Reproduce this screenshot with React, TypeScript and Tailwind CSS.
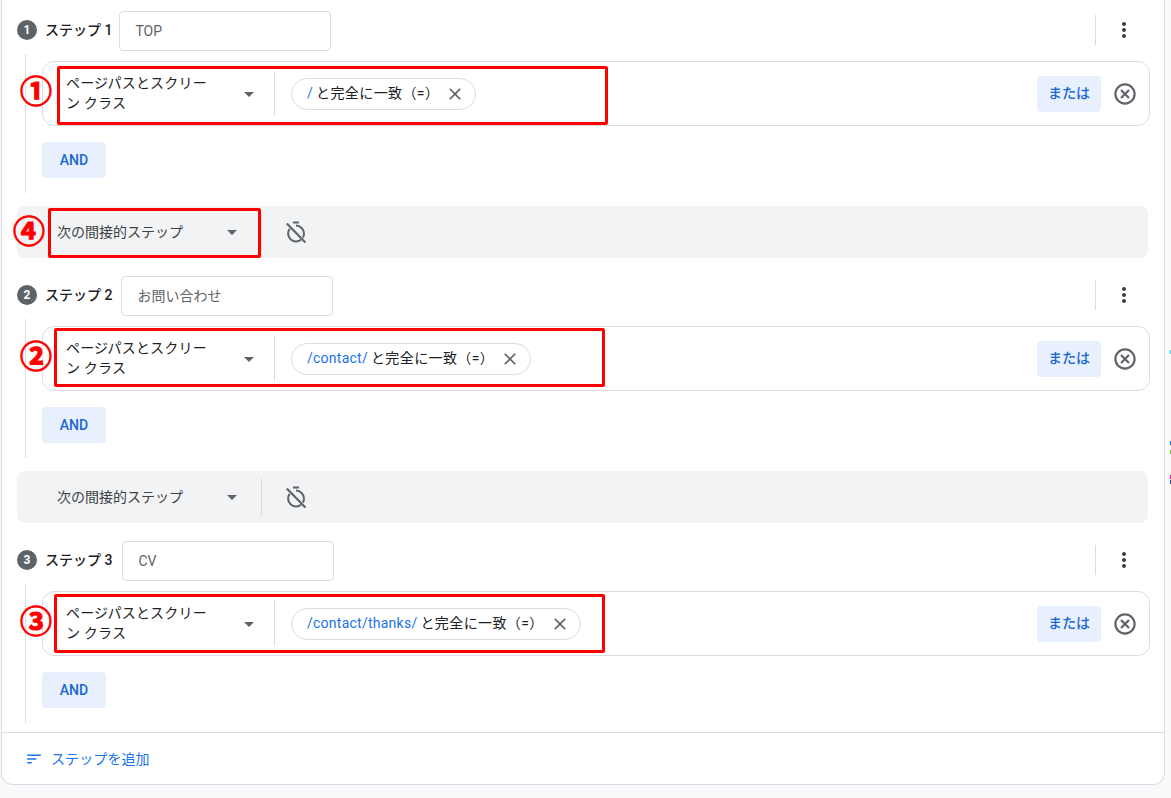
import { MdArrowDropDown, MdClose, MdMoreVert, MdSort } from 'react-icons/md';

const font = { fontFamily: 'Roboto, "Noto Sans CJK JP", sans-serif' };

interface StepProps {
  num: number;
  name: string;
  path: string;
  inputMargin: string;
  chipWidth: string;
  mark: string;
  boxClass: string;
}

const steps: StepProps[] = [
  { num: 1, name: 'TOP', path: '/', inputMargin: 'ml-[7px]', chipWidth: 'w-[185px]', mark: '①', boxClass: 'left-[14px] top-[4px]' },
  { num: 2, name: 'お問い合わせ', path: '/contact/', inputMargin: 'ml-[9px]', chipWidth: 'w-[240px]', mark: '②', boxClass: 'left-[11px] top-[1px]' },
  { num: 3, name: 'CV', path: '/contact/thanks/', inputMargin: 'ml-[10px]', chipWidth: 'w-[290px]', mark: '③', boxClass: 'left-[11px] top-[2px]' },
];

function RemoveIcon() {
  return (
    <svg className="ml-[11px] mr-[11px] text-[#5f6368]" width="26" height="26" viewBox="0 0 26 26" fill="none" stroke="currentColor">
      <circle cx="13" cy="13" r="9.6" strokeWidth="2.2" />
      <path d="M9 9l8 8M17 9l-8 8" strokeWidth="2.2" />
    </svg>
  );
}

function TimerOffIcon() {
  return (
    <svg className="ml-[22px] text-[#5f6368]" width="24" height="24" viewBox="0 0 24 24" fill="none" stroke="currentColor" strokeWidth="2">
      <path d="M9 2.5h6" />
      <path d="M12 5.6a8 8 0 0 1 8 8c0 1.5-.4 2.8-1.1 4M17 19.8A8 8 0 0 1 5.6 8.8" />
      <path d="M2.8 3.4l18.6 19" strokeWidth="2.2" />
    </svg>
  );
}

function Step({ num, name, path, inputMargin, chipWidth, mark, boxClass }: StepProps) {
  return (
    <div>
      <div className="flex h-[40px] items-center pl-[15px]">
        <span className="-mt-[2px] flex h-[20px] w-[20px] items-center justify-center rounded-full bg-[#5f6368] text-[12px] font-bold text-white">{num}</span>
        <span className="-mt-[2px] ml-[8px] whitespace-nowrap text-[14px] font-medium text-[#202124]">ステップ {num}</span>
        <div className={`${inputMargin} flex h-[40px] w-[212px] items-center rounded border border-[#dadce0] bg-white pl-[15px] text-[14px] text-[#5f6368]`}>{name}</div>
        <div className="-mt-[3px] ml-auto flex items-center pr-[28px]">
          <span className="h-[30px] w-px bg-[#dadce0]" />
          <MdMoreVert className="ml-[16px] text-[#3c4043]" size={24} />
        </div>
      </div>
      <div className="ml-[23px] mt-[3px] h-[139px] border-l border-[#dadce0] pl-[16px] pr-[14px] pt-[7px]">
        <div className="relative flex h-[65px] items-center rounded-xl border border-[#dadce0] bg-white">
          <div className="flex h-[45px] w-[232px] items-center border-r border-[#dadce0] pl-[23px] pr-[13px]">
            <span className="-mt-px w-[146px] text-[14px] leading-[20px] tracking-[0.2px] text-[#202124]">ページパスとスクリーン クラス</span>
            <MdArrowDropDown className="ml-auto text-[#5f6368]" size={24} />
          </div>
          <div className={`${chipWidth} ml-[16px] flex h-[32px] items-center rounded-full border border-[#dadce0] pl-[15px] pr-[10px] text-[14px] text-[#202124]`}>
            <span className="tracking-[0.25px] text-[#1a73e8]">{path}</span>
            <span className="ml-[3px] whitespace-nowrap tracking-[0.4px]">と完全に一致（=）</span>
            <MdClose className="ml-auto text-[#5f6368]" size={20} />
          </div>
          <button className="ml-auto flex h-[36px] w-[64px] items-center justify-center rounded bg-[#e8f0fe] text-[14px] font-medium text-[#1967d2]">または</button>
          <RemoveIcon />
          <div className={`absolute ${boxClass} h-[59px] w-[551px] rounded-[2px] border-[3px] border-[#ff0000]`} />
          <span className="absolute -left-[23px] top-[10px] text-[32px] font-bold leading-[40px] text-[#ff0000] [-webkit-text-stroke:1px_#ff0000]">{mark}</span>
        </div>
        <button className="mt-[16px] flex h-[36px] w-[64px] items-center justify-center rounded bg-[#e8f0fe] text-[14px] font-medium text-[#1967d2]">AND</button>
      </div>
    </div>
  );
}

function Connector({ marked }: { marked?: boolean }) {
  return (
    <div className="relative ml-[15px] mr-[16px] mt-[13px] mb-[18px] flex h-[52px] items-center rounded-lg bg-[#f1f3f4]">
      <div className="flex h-[38px] w-[245px] items-center border-r border-[#dadce0] pl-[40px] pr-[17px] text-[14px] text-[#3c4043]">
        <span className="mt-px">次の間接的ステップ</span>
        <MdArrowDropDown className="ml-auto text-[#5f6368]" size={24} />
      </div>
      <TimerOffIcon />
      {marked && (
        <>
          <div className="absolute left-[31px] top-[2px] h-[50px] w-[213px] rounded-[2px] border-[3px] border-[#ff0000]" />
          <span className="absolute -left-[4px] top-[6px] text-[32px] font-bold leading-[40px] text-[#ff0000] [-webkit-text-stroke:1px_#ff0000]">④</span>
        </>
      )}
    </div>
  );
}

export default function App() {
  return (
    <div className="relative h-[798px] w-[1171px] overflow-hidden bg-[#f8f9fa]" style={font}>
      <div className="ml-px h-[785px] w-[1164px] rounded-b-xl border-x border-b border-[#dadce0] bg-white pt-[11px]">
        <Step {...steps[0]} />
        <Connector marked />
        <Step {...steps[1]} />
        <Connector />
        <Step {...steps[2]} />
        <div className="mt-[9px] flex h-[52px] items-center border-t border-[#dadce0] pl-[23px] pt-px text-[14px] text-[#1a73e8]">
          <MdSort size={18} />
          <span className="ml-[8px] tracking-[0.1px]">ステップを追加</span>
        </div>
      </div>
      <span className="absolute left-[1170px] top-[350px] h-[4px] w-px bg-[#4ecde6]" />
      <span className="absolute left-[1170px] top-[441px] h-[4px] w-px bg-[#1a73e8]" />
      <span className="absolute left-[1170px] top-[450px] h-[4px] w-px bg-[#7cb342]" />
      <span className="absolute left-[1170px] top-[475px] h-[4px] w-px bg-[#e91e8c]" />
      <span className="absolute left-[1170px] top-[480px] h-[4px] w-px bg-[#3949ab]" />
    </div>
  );
}
